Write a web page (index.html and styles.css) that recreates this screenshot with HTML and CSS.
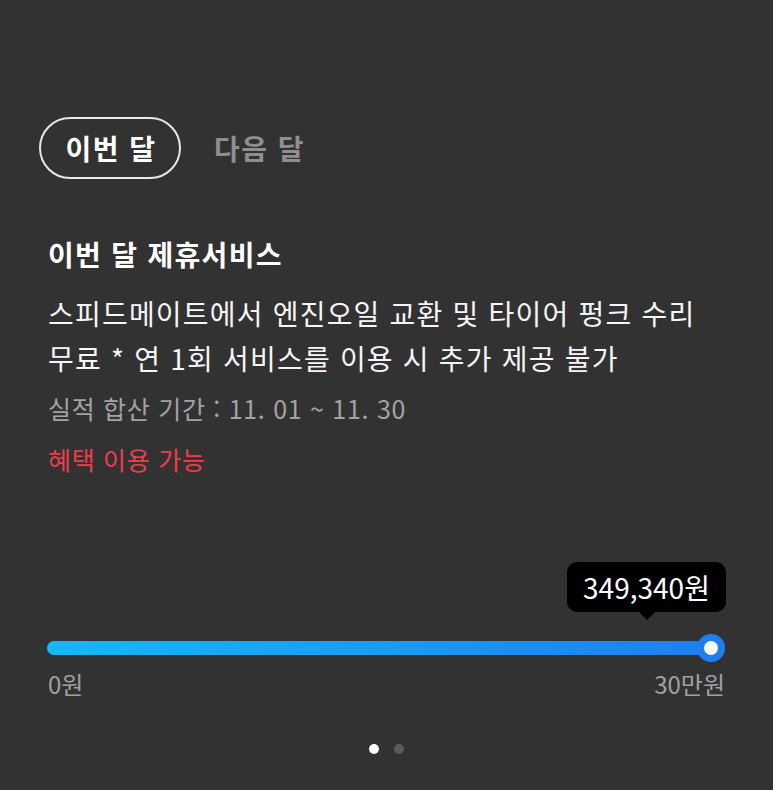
FILE: index.html
```html
<!DOCTYPE html>
<html lang="ko">
<head>
<meta charset="utf-8">
<link rel="stylesheet" href="styles.css">
</head>
<body>
<div class="page">
  <div class="tabs">
    <div class="tab tab-active">이번 달</div>
    <div class="tab">다음 달</div>
  </div>
  <h2 class="title">이번 달 제휴서비스</h2>
  <p class="desc">스피드메이트에서 엔진오일 교환 및 타이어 펑크 수리<br>무료 * 연 1회 서비스를 이용 시 추가 제공 불가</p>
  <p class="period">실적 합산 기간 : 11. 01 ~ 11. 30</p>
  <p class="status">혜택 이용 가능</p>
  <div class="slider">
    <div class="tip-row">
      <div class="tip">349,340원</div>
    </div>
    <div class="track">
      <div class="thumb"></div>
    </div>
    <div class="labels">
      <span>0원</span>
      <span>30만원</span>
    </div>
  </div>
  <div class="dots">
    <span class="dot dot-on"></span>
    <span class="dot"></span>
  </div>
</div>
</body>
</html>
```

FILE: styles.css
```css
html, body {
  margin: 0;
  padding: 0;
  background: #323232;
}
body {
  font-family: "Noto Sans CJK KR", "Noto Sans", sans-serif;
  color: #f4f4f4;
  width: 773px;
  height: 790px;
  overflow: hidden;
}
.page {
  padding: 117px 48px 0 48px;
}
.tabs {
  display: flex;
  align-items: center;
  gap: 33px;
  margin-left: -9px;
  height: 62px;
}
.tab {
  font-size: 28px;
  font-weight: 700;
  color: #8f8f8f;
  line-height: 36px;
  letter-spacing: 1.5px;
}
.tab-active {
  box-sizing: border-box;
  height: 62px;
  width: 142px;
  border: 2px solid #e8e8e8;
  border-radius: 31px;
  display: flex;
  align-items: center;
  justify-content: center;
  padding-left: 2px;
  color: #ffffff;
}
.title {
  margin: 57px 0 0 0;
  font-size: 28px;
  font-weight: 700;
  line-height: 36px;
  letter-spacing: 1.3px;
  color: #ffffff;
}
.desc {
  margin: 19px 0 0 0;
  font-size: 28px;
  font-weight: 400;
  line-height: 45px;
  letter-spacing: 1.2px;
  color: #f6f6f6;
}
.period {
  margin: 7px 0 0 0;
  font-size: 25px;
  line-height: 40px;
  color: #a3a3a3;
  letter-spacing: 0.7px;
}
.status {
  margin: 11px 0 0 0;
  font-size: 25px;
  line-height: 40px;
  color: #ef3e4a;
  letter-spacing: 0.7px;
}
.slider {
  margin-top: 83px;
}
.tip-row {
  display: flex;
  justify-content: flex-end;
  margin-right: -1px;
}
.tip {
  position: relative;
  box-sizing: border-box;
  width: 159px;
  height: 50px;
  background: #000000;
  border-radius: 10px;
  color: #ffffff;
  font-size: 28px;
  line-height: 50px;
  text-align: center;
}
.tip::after {
  content: "";
  position: absolute;
  left: 50%;
  bottom: -8px;
  margin-left: -8px;
  border-left: 8px solid transparent;
  border-right: 8px solid transparent;
  border-top: 8px solid #000000;
}
.track {
  position: relative;
  margin-top: 29px;
  margin-left: -1px;
  height: 14px;
  border-radius: 7px;
  background: linear-gradient(90deg, #16b8f8 0%, #1a9bf4 50%, #1e7ef0 100%);
}
.thumb {
  position: absolute;
  right: 0;
  top: -7px;
  box-sizing: border-box;
  width: 28px;
  height: 28px;
  border-radius: 50%;
  background: #ffffff;
  border: 7px solid #1f7ef2;
}
.labels {
  display: flex;
  justify-content: space-between;
  margin-top: 14px;
  font-size: 24px;
  line-height: 30px;
  color: #a0a0a0;
}
.dots {
  display: flex;
  justify-content: center;
  gap: 15px;
  margin-top: 45px;
}
.dot {
  width: 10px;
  height: 10px;
  border-radius: 50%;
  background: #5b5b5b;
}
.dot-on {
  background: #ffffff;
}
```
